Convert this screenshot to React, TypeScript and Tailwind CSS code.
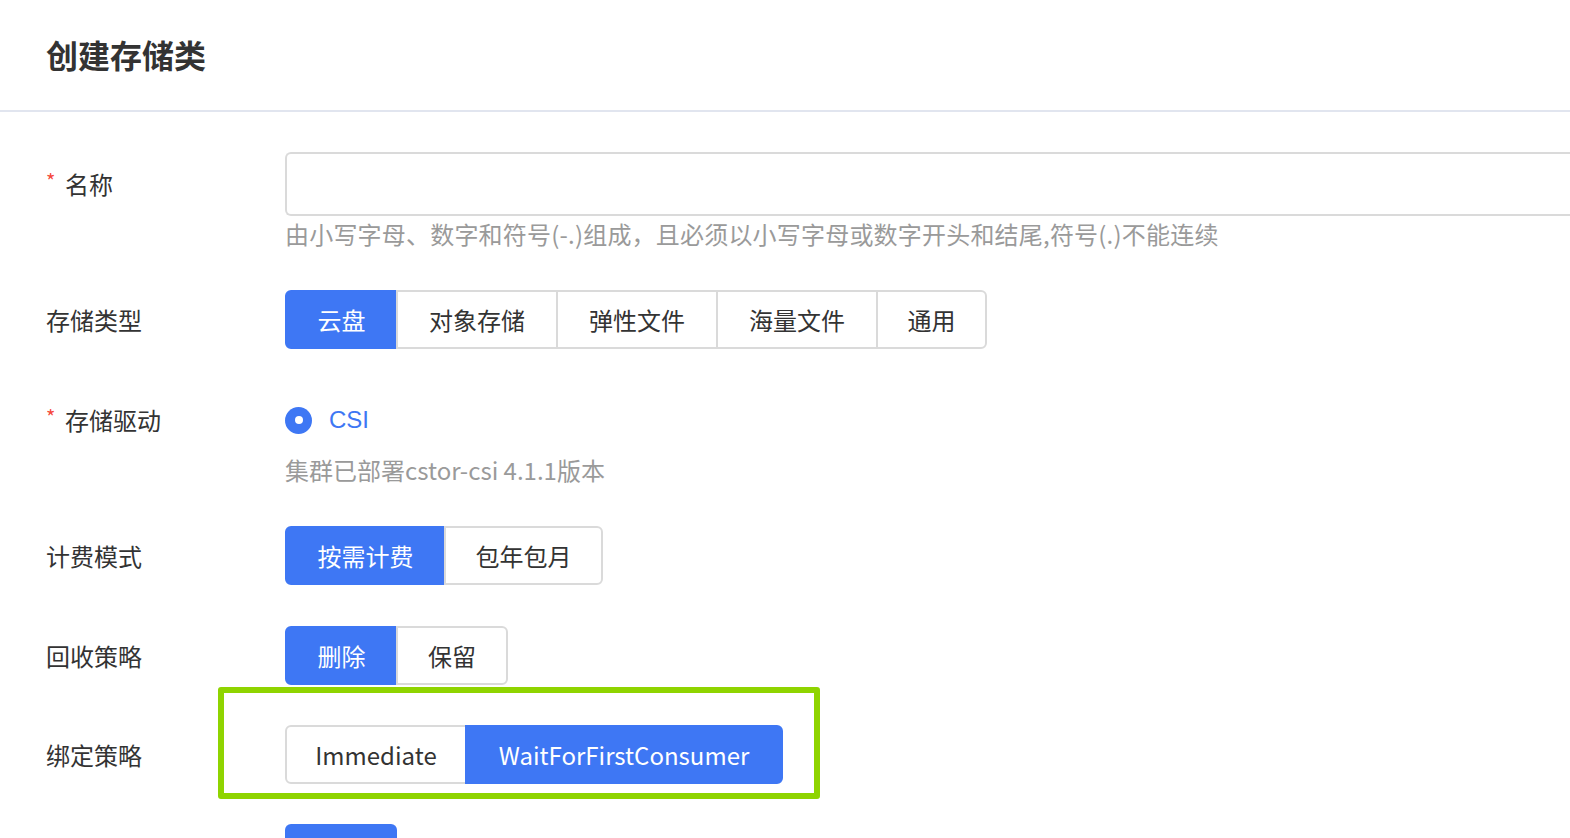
import React from "react";

type Opt = { label: string; w: number };

const Segmented = ({ options, active }: { options: Opt[]; active: number }) => (
  <div className="flex h-[59px]">
    {options.map((o, i) => {
      const first = i === 0;
      const last = i === options.length - 1;
      const on = i === active;
      return (
        <div
          key={o.label}
          style={{ width: o.w }}
          className={`flex items-center justify-center ${first ? "rounded-l-[6px]" : "-ml-[2px]"} ${
            last ? "rounded-r-[6px]" : ""
          } ${on && !first ? "z-10" : ""} ${
            on
              ? "bg-[#3e77f4] border-2 border-[#3e77f4] text-white"
              : "bg-white border-2 border-[#dadada] text-[#333]"
          }`}
        >
          {o.label}
        </div>
      );
    })}
  </div>
);

const Label = ({ text, required }: { text: string; required?: boolean }) => (
  <div className="w-[239px] shrink-0 flex items-center">
    {required ? <span className="text-[#f5483b] text-[20px] w-[19px] -mt-[6px]">*</span> : null}
    <span>{text}</span>
  </div>
);

export default function App() {
  return (
    <div
      className="w-[1570px] h-[838px] overflow-hidden bg-white text-[#333] text-[24px] leading-[30px]"
      style={{ fontFamily: '"Noto Sans CJK SC", "Noto Sans", sans-serif' }}
    >
      {/* header */}
      <div className="h-[112px] border-b-2 border-[#e1e5ef] pl-[46px] flex items-center">
        <h1 className="text-[32px] font-bold text-[#333] -mt-[2px]">创建存储类</h1>
      </div>

      <div className="pl-[46px]">
        {/* 名称 */}
        <div className="mt-[40px] flex h-[64px]">
          <Label text="名称" required />
          <div className="flex-1 h-[64px] border-2 border-[#dadada] rounded-l-[6px] border-r-0" />
        </div>
        <div className="pl-[239px] mt-[3px] text-[#9a9a9a] tracking-[0.2px]">
          由小写字母、数字和符号(-.)组成，且必须以小写字母或数字开头和结尾,符号(.)不能连续
        </div>

        {/* 存储类型 */}
        <div className="mt-[41px] flex">
          <Label text="存储类型" />
          <Segmented
            active={0}
            options={[
              { label: "云盘", w: 113 },
              { label: "对象存储", w: 162 },
              { label: "弹性文件", w: 162 },
              { label: "海量文件", w: 162 },
              { label: "通用", w: 111 },
            ]}
          />
        </div>

        {/* 存储驱动 */}
        <div className="mt-[56px] flex h-[30px]">
          <Label text="存储驱动" required />
          <div className="flex items-center">
            <span className="w-[27px] h-[27px] rounded-full bg-[#3e77f4] flex items-center justify-center">
              <span className="w-[8px] h-[8px] rounded-full bg-white" />
            </span>
            <span className="ml-[17px] text-[#3e77f4]" style={{ fontFamily: '"Liberation Sans", Arial, sans-serif' }}>
              CSI
            </span>
          </div>
        </div>
        <div className="pl-[239px] mt-[20px] text-[#9a9a9a]">集群已部署cstor-csi 4.1.1版本</div>

        {/* 计费模式 */}
        <div className="mt-[41px] flex">
          <Label text="计费模式" />
          <Segmented
            active={0}
            options={[
              { label: "按需计费", w: 161 },
              { label: "包年包月", w: 159 },
            ]}
          />
        </div>

        {/* 回收策略 */}
        <div className="mt-[41px] flex">
          <Label text="回收策略" />
          <Segmented
            active={0}
            options={[
              { label: "删除", w: 113 },
              { label: "保留", w: 112 },
            ]}
          />
        </div>

        {/* 绑定策略 */}
        <div className="mt-[40px] flex relative">
          <Label text="绑定策略" />
          <Segmented
            active={1}
            options={[
              { label: "Immediate", w: 182 },
              { label: "WaitForFirstConsumer", w: 318 },
            ]}
          />
          <div className="absolute left-[172px] -top-[38px] w-[602px] h-[112px] border-[6px] border-[#8fd400] rounded-[3px] pointer-events-none" />
        </div>

        <div className="mt-[40px] flex">
          <div className="w-[239px] shrink-0" />
          <div className="w-[112px] h-[59px] bg-[#3e77f4] rounded-[6px]" />
        </div>
      </div>
    </div>
  );
}
